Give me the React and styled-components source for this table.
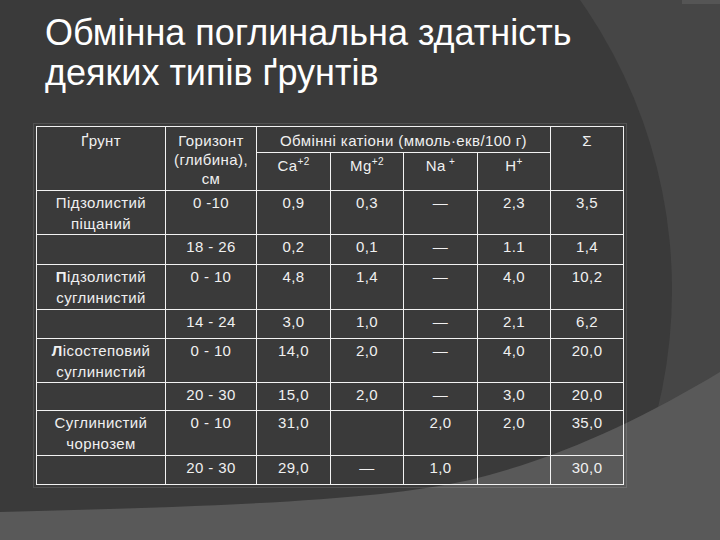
import React from "react";
import styled, { createGlobalStyle } from "styled-components";

const GlobalStyle = createGlobalStyle`
  html, body {
    margin: 0;
    padding: 0;
    background: #3a3a3a;
  }
  body {
    font-family: "Liberation Sans", Arial, sans-serif;
  }
`;

const COLS = [129, 91, 74, 73, 74, 73, 73];

const rows = [
  { h: 44, soil: ["Підзолистий", "піщаний"], vals: ["0 -10", "0,9", "0,3", "—", "2,3", "3,5"] },
  { h: 30, soil: null, vals: ["18 - 26", "0,2", "0,1", "—", "1.1", "1,4"] },
  { h: 45, soil: ["Підзолистий", "суглинистий"], bold: true, vals: ["0 - 10", "4,8", "1,4", "—", "4,0", "10,2"] },
  { h: 29, soil: null, vals: ["14 - 24", "3,0", "1,0", "—", "2,1", "6,2"] },
  { h: 44, soil: ["Лісостеповий", "суглинистий"], bold: true, vals: ["0 - 10", "14,0", "2,0", "—", "4,0", "20,0"] },
  { h: 28, soil: null, vals: ["20 - 30", "15,0", "2,0", "—", "3,0", "20,0"] },
  { h: 45, soil: ["Суглинистий", "чорнозем"], vals: ["0 - 10", "31,0", "", "2,0", "2,0", "35,0"] },
  { h: 29, soil: null, vals: ["20 - 30", "29,0", "—", "1,0", "", "30,0"] },
];

const SoilName = ({ soil, bold }) => {
  if (!soil) return null;
  const [first, second] = soil;
  return (
    <>
      {bold ? <b>{first[0]}</b> : first[0]}
      {first.slice(1)}
      <br />
      {second}
    </>
  );
};

export default function App() {
  return (
    <>
      <GlobalStyle />
      <Slide>
        <Backdrop viewBox="0 0 720 540" preserveAspectRatio="none">
          <rect x="0" y="0" width="720" height="540" fill="#464646" />
          <rect x="682" y="0" width="38" height="4" fill="#555" />
          <circle cx="169" cy="290" r="503" fill="#3a3a3a" />
          <path
            d="M0,512 C240,506 380,500 470,480 C560,458 640,420 720,372 L720,540 L0,540 Z"
            fill="#595959"
          />
        </Backdrop>
        <Content>
          <Title>
            Обмінна поглинальна здатність
            <br />
            деяких типів ґрунтів
          </Title>
          <DataTable>
            <colgroup>
              {COLS.map((w, i) => (
                <Col key={i} $w={w} />
              ))}
            </colgroup>
            <thead>
              <Row $h={26}>
                <HeadCell rowSpan={2}>Ґрунт</HeadCell>
                <HeadCell rowSpan={2}>
                  Горизонт
                  <br />
                  (глибина),
                  <br />
                  см
                </HeadCell>
                <HeadCell colSpan={4} $pad={4}>
                  Обмінні катіони (ммоль·екв/100 г)
                </HeadCell>
                <HeadCell rowSpan={2}>Σ</HeadCell>
              </Row>
              <Row $h={38}>
                <HeadCell $pad={3}>
                  Ca<Sup>+2</Sup>
                </HeadCell>
                <HeadCell $pad={3}>
                  Mg<Sup>+2</Sup>
                </HeadCell>
                <HeadCell $pad={3}>
                  Na<Sup>&nbsp;+</Sup>
                </HeadCell>
                <HeadCell $pad={3}>
                  H<Sup>+</Sup>
                </HeadCell>
              </Row>
            </thead>
            <tbody>
              {rows.map((r, i) => (
                <Row key={i} $h={r.h}>
                  <Cell>
                    <SoilName soil={r.soil} bold={r.bold} />
                  </Cell>
                  {r.vals.map((v, j) => (
                    <Cell key={j}>{v}</Cell>
                  ))}
                </Row>
              ))}
            </tbody>
          </DataTable>
        </Content>
      </Slide>
    </>
  );
}

const Slide = styled.div`
  position: relative;
  width: 720px;
  height: 540px;
  overflow: hidden;
  background: #3a3a3a;
`;

const Backdrop = styled.svg`
  position: absolute;
  inset: 0;
  width: 100%;
  height: 100%;
  z-index: 0;
`;

const Content = styled.div`
  position: relative;
  z-index: 1;
  display: flex;
  flex-direction: column;
  padding-top: 13px;
`;

const Title = styled.h1`
  margin: 0 0 33px 45px;
  font-family: "Liberation Sans", Arial, sans-serif;
  font-weight: normal;
  font-size: 36px;
  line-height: 40px;
  color: #ffffff;
`;

const DataTable = styled.table`
  margin-left: 36px;
  width: 588px;
  table-layout: fixed;
  border-collapse: collapse;
  outline: 1px solid rgba(255, 255, 255, 0.12);
  outline-offset: 2px;
  font-family: "Liberation Sans", Arial, sans-serif;
  font-size: 15px;
  letter-spacing: 0.4px;
  color: #f0f0f0;
`;

const Col = styled.col`
  width: ${(p) => p.$w}px;
`;

const Row = styled.tr`
  height: ${(p) => p.$h}px;
`;

const HeadCell = styled.th`
  border: 1px solid #f2f2f2;
  padding: ${(p) => p.$pad ?? 4}px 0 0;
  font-weight: normal;
  text-align: center;
  vertical-align: top;
  line-height: 19px;
  white-space: nowrap;
`;

const Cell = styled.td`
  border: 1px solid #f2f2f2;
  padding: 1px 0 0;
  text-align: center;
  vertical-align: top;
  line-height: 21px;
  white-space: nowrap;
`;

const Sup = styled.sup`
  font-size: 10px;
  line-height: 0;
  vertical-align: 6px;
`;
